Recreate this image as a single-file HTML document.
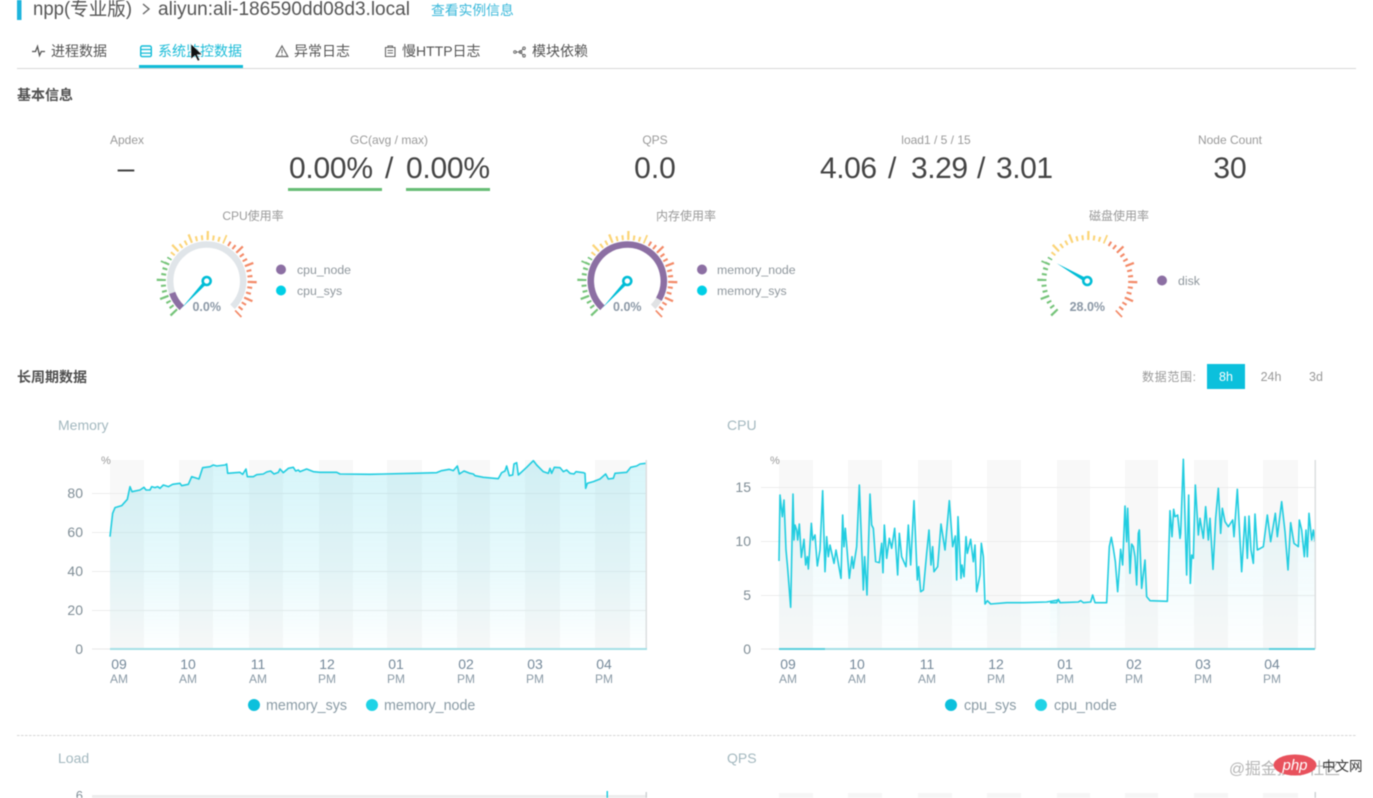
<!DOCTYPE html>
<html lang="zh">
<head>
<meta charset="utf-8">
<title>npp</title>
<style>
html,body{margin:0;padding:0;background:#fff;width:1373px;height:798px;overflow:hidden}
svg{display:block;filter:blur(.6px)}
text{font-family:"Liberation Sans","Noto Sans CJK SC",sans-serif}
.lab{font-size:12px;fill:#9a9a9a}
.val{font-size:30px;fill:#444}
.h{font-size:14px;fill:#505050;font-weight:bold}
.tab{font-size:14px;fill:#555}
.leg{font-size:12.3px;fill:#8f979d}
.pct{font-size:12.5px;fill:#8b98a6;font-weight:bold}
.ct{font-size:14px;fill:#a3b8bf}
.y{font-size:14px;fill:#7f8d96;text-anchor:end}
.xl{font-size:14px;fill:#75899a;text-anchor:middle}
.xs{font-size:12px;fill:#8a9aa6;text-anchor:middle}
.l2{font-size:14.3px;fill:#8a9ba5}
.band{fill:#f8f8f8}
.grid{stroke:#ececec;stroke-width:1}
.line{fill:none;stroke:#22cde0;stroke-width:4.8;stroke-linejoin:round}
</style>
</head>
<body>
<svg width="1373" height="798" viewBox="0 0 1373 798" xmlns="http://www.w3.org/2000/svg">
<defs>
<linearGradient id="gm" gradientUnits="userSpaceOnUse" x1="0" y1="60" x2="0" y2="628">
<stop offset="0" stop-color="#12c4de" stop-opacity=".17"/><stop offset=".55" stop-color="#12c8e2" stop-opacity=".1"/><stop offset="1" stop-color="#12c8e2" stop-opacity=".005"/>
</linearGradient>
<linearGradient id="gc" gradientUnits="userSpaceOnUse" x1="0" y1="30" x2="0" y2="597">
<stop offset="0" stop-color="#12c4de" stop-opacity=".11"/><stop offset="1" stop-color="#12c4de" stop-opacity=".005"/>
</linearGradient>
<g id="ticks" fill="none">
<path d="M-30.76 30.76A43.5 43.5 0 0 1 -36.89 -23.05" pathLength="77" stroke="#76c47a" stroke-width="5" stroke-dasharray="2.7 4.8"/>
<path d="M-34.51 -26.48A43.5 43.5 0 0 1 18.04 -39.58" pathLength="77" stroke="#fbd477" stroke-width="5" stroke-dasharray="2.7 4.8"/>
<path d="M21.75 -37.67A43.5 43.5 0 0 1 29.67 31.81" pathLength="107" stroke="#f38a68" stroke-width="5" stroke-dasharray="2.7 4.8"/>
<path d="M-32.17 32.17A45.5 45.5 0 0 1 -41.4 -18.87" pathLength="69.5" stroke="#76c47a" stroke-width="9" stroke-dasharray="2.7 19.8"/>
<path d="M-32.17 -32.17A45.5 45.5 0 0 1 18.87 -41.4" pathLength="69.5" stroke="#fbd477" stroke-width="9" stroke-dasharray="2.7 19.8"/>
<path d="M32.17 -32.17A45.5 45.5 0 0 1 31.03 33.28" pathLength="92" stroke="#f38a68" stroke-width="9" stroke-dasharray="2.7 19.8"/>
</g>
</defs>

<!-- header -->
<rect x="17" y="0" width="4.5" height="20" fill="#1eb4dc"/>
<text x="33" y="15" font-size="19" fill="#555" textLength="99" lengthAdjust="spacingAndGlyphs">npp(专业版)</text>
<path d="M143 4l6 5-6 5" fill="none" stroke="#666" stroke-width="1.4"/>
<text x="158" y="15" font-size="19" fill="#555" textLength="252" lengthAdjust="spacingAndGlyphs">aliyun:ali-186590dd08d3.local</text>
<text x="431" y="15" font-size="13.8" fill="#3ab8da">查看实例信息</text>

<!-- tabs -->
<path d="M32 51.500h3.500l2-5 2 9 1.800-4H45" fill="none" stroke="#555" stroke-width="1.3"/>
<text class="tab" x="51" y="56">进程数据</text>
<rect x="140.700" y="46" width="10.600" height="10.600" rx="1.500" fill="none" stroke="#12bcd8" stroke-width="1.400"/>
<path d="M141 49.500h10M141 53.100h10" stroke="#12bcd8" stroke-width="1.200"/>
<text class="tab" x="158" y="56" style="fill:#1cbcd8">系统监控数据</text>
<rect x="139" y="65" width="104" height="3" fill="#12bcd8"/>
<path d="M282 46l5.800 10.500h-11.600z" fill="none" stroke="#666" stroke-width="1.200"/>
<path d="M282 49.500v4M282 54.500v1" stroke="#666" stroke-width="1"/>
<text class="tab" x="294" y="56">异常日志</text>
<path d="M385.500 47.500h9.500v9H385.500zM388 46h4.500v1.500H388zM387.500 50.500h5.500M387.500 53h5.500" fill="none" stroke="#666" stroke-width="1.100"/>
<text class="tab" x="402" y="56">慢HTTP日志</text>
<path d="M515.500 52h4M520 52l3.500-3.500M520 52l3.500 3.500" stroke="#777" stroke-width=".9" fill="none"/>
<circle cx="515" cy="52" r="1.300" fill="none" stroke="#666"/><circle cx="524" cy="48.300" r="1.300" fill="none" stroke="#666"/><circle cx="524" cy="55.700" r="1.300" fill="none" stroke="#666"/><circle cx="520.500" cy="52" r="1.400" fill="none" stroke="#666"/>
<text class="tab" x="532" y="56">模块依赖</text>
<rect x="17" y="68" width="1339" height="1" fill="#d8d8d8"/>
<path d="M191 44v15l4-3.600 2.800 5.600 2-1-2.800-5.400 5 0z" fill="#111" stroke="#fff" stroke-width=".5"/>

<text class="h" x="17" y="100">基本信息</text>

<!-- metrics -->
<g text-anchor="middle">
<text class="lab" x="127" y="144">Apdex</text>
<text class="lab" x="389" y="144">GC(avg / max)</text>
<text class="lab" x="655" y="144">QPS</text>
<text class="lab" x="936" y="144">load1 / 5 / 15</text>
<text class="lab" x="1230" y="144">Node Count</text>
<text class="val" x="126" y="178">–</text>
<text class="val" x="655" y="178">0.0</text>
<text class="val" x="1230" y="178">30</text>
</g>
<text class="val" x="289" y="178" textLength="84">0.00%</text>
<text class="val" x="385" y="178">/</text>
<text class="val" x="406" y="178" textLength="84">0.00%</text>
<text class="val" x="820" y="178" textLength="57">4.06</text>
<text class="val" x="888" y="178">/</text>
<text class="val" x="911" y="178" textLength="57">3.29</text>
<text class="val" x="977" y="178">/</text>
<text class="val" x="996" y="178" textLength="57">3.01</text>
<rect x="288" y="188" width="94" height="3" fill="#67bd75"/>
<rect x="406" y="188" width="84" height="3" fill="#67bd75"/>

<!-- gauges -->
<g text-anchor="middle">
<text class="lab" x="253" y="220">CPU使用率</text>
<text class="lab" x="686" y="220">内存使用率</text>
<text class="lab" x="1119" y="220">磁盘使用率</text>
</g>

<g transform="translate(206.7 281)">
<use href="#ticks"/>
<path d="M-24.9 26.7A36.5 36.5 0 1 1 25.8 25.8" fill="none" stroke="#e0e5e9" stroke-width="6.5"/>
<path d="M-24.9 26.7A36.5 36.5 0 0 1 -34.5 11.9" fill="none" stroke="#8c6fa3" stroke-width="6.5"/>
<polygon points="-25,27 1.5,1.4 -1.5,-1.4" fill="#00bdd6"/>
<circle r="4" fill="#fff" stroke="#00bdd6" stroke-width="2.6"/>
<text class="pct" x="0" y="30" text-anchor="middle">0.0%</text>
</g>
<g transform="translate(627.3 281)">
<use href="#ticks"/>
<path d="M-24.9 26.7A36.5 36.5 0 1 1 25.8 25.8" fill="none" stroke="#e0e2e4" stroke-width="6.5"/>
<path d="M-24.9 26.7A36.5 36.5 0 1 1 31.6 18.25" fill="none" stroke="#8c6fa3" stroke-width="6.5"/>
<polygon points="-25,27 1.5,1.4 -1.5,-1.4" fill="#00bdd6"/>
<circle r="4" fill="#fff" stroke="#00bdd6" stroke-width="2.6"/>
<text class="pct" x="0" y="30" text-anchor="middle">0.0%</text>
</g>
<g transform="translate(1087.3 281)">
<use href="#ticks"/>
<polygon points="-30.7,-17.7 1,-1.9 -1,1.9" fill="#00bdd6"/>
<circle r="4" fill="#fff" stroke="#00bdd6" stroke-width="2.6"/>
<text class="pct" x="0" y="30" text-anchor="middle">28.0%</text>
</g>

<circle cx="281" cy="269.500" r="5" fill="#8c6fa3"/><text class="leg" x="297" y="274">cpu_node</text>
<circle cx="281" cy="290.500" r="5" fill="#00cfe6"/><text class="leg" x="297" y="295">cpu_sys</text>
<circle cx="702" cy="269.500" r="5" fill="#8c6fa3"/><text class="leg" x="717" y="274">memory_node</text>
<circle cx="702" cy="290.500" r="5" fill="#00cfe6"/><text class="leg" x="717" y="295">memory_sys</text>
<circle cx="1162" cy="280.500" r="5" fill="#8c6fa3"/><text class="leg" x="1178" y="285">disk</text>

<!-- long period -->
<text class="h" x="17" y="382">长周期数据</text>
<text class="lab" x="1142" y="381" textLength="54">数据范围:</text>
<rect x="1207" y="364" width="38" height="25" fill="#0cc0dc"/>
<text x="1226" y="381" font-size="12.500" fill="#fff" text-anchor="middle">8h</text>
<text x="1271" y="381" font-size="12.500" fill="#999" text-anchor="middle">24h</text>
<text x="1316" y="381" font-size="12.500" fill="#999" text-anchor="middle">3d</text>

<!-- Memory chart -->
<text class="ct" x="58" y="430">Memory</text>
<g class="band">
<rect x="110" y="460" width="34" height="189"/><rect x="179" y="460" width="34" height="189"/><rect x="249" y="460" width="34" height="189"/><rect x="319" y="460" width="34" height="189"/><rect x="387" y="460" width="35" height="189"/><rect x="457" y="460" width="33" height="189"/><rect x="525" y="460" width="35" height="189"/><rect x="595" y="460" width="35" height="189"/>
</g>
<path class="grid" d="M92 493.500H646M92 532.500H646M92 571.500H646M92 610.500H646"/>
<g transform="translate(50 440) scale(.33333)">
<path fill="url(#gm)" d="M180 290L188 220 195 203 215 197 232 178 240 140 246 155 270 150 282 142 288 150 300 150 305 140 315 143 323 140 330 145 340 135 355 140 368 133 390 130 395 137 415 133 425 110 447 117 458 83 480 80 490 75 500 78 525 75 530 72 533 100 570 97 578 103 588 87 592 110 610 110 620 104 640 102 650 96 662 93 672 102 685 97 690 87 700 98 715 85 730 82 737 93 745 90 750 95 770 87 790 95 810 97 860 97 870 102 960 103 1090 100 1160 98 1175 92 1198 88 1210 92 1222 78 1228 102 1242 93 1260 100 1270 102 1275 107 1300 112 1345 116 1355 98 1365 93 1370 78 1378 107 1388 105 1392 72 1400 68 1405 105 1430 82 1450 62 1460 75 1480 95 1495 100 1500 85 1505 100 1513 82 1530 83 1540 95 1550 90 1560 100 1572 102 1578 95 1600 98 1605 100 1607 145 1612 130 1630 125 1650 117 1667 102 1675 117 1690 115 1695 100 1730 97 1742 82 1760 78 1770 72 1788 70V628H180Z"/>
<path class="line" d="M180 290L188 220 195 203 215 197 232 178 240 140 246 155 270 150 282 142 288 150 300 150 305 140 315 143 323 140 330 145 340 135 355 140 368 133 390 130 395 137 415 133 425 110 447 117 458 83 480 80 490 75 500 78 525 75 530 72 533 100 570 97 578 103 588 87 592 110 610 110 620 104 640 102 650 96 662 93 672 102 685 97 690 87 700 98 715 85 730 82 737 93 745 90 750 95 770 87 790 95 810 97 860 97 870 102 960 103 1090 100 1160 98 1175 92 1198 88 1210 92 1222 78 1228 102 1242 93 1260 100 1270 102 1275 107 1300 112 1345 116 1355 98 1365 93 1370 78 1378 107 1388 105 1392 72 1400 68 1405 105 1430 82 1450 62 1460 75 1480 95 1495 100 1500 85 1505 100 1513 82 1530 83 1540 95 1550 90 1560 100 1572 102 1578 95 1600 98 1605 100 1607 145 1612 130 1630 125 1650 117 1667 102 1675 117 1690 115 1695 100 1730 97 1742 82 1760 78 1770 72 1788 70"/>
</g>
<rect x="645.500" y="460" width="1.500" height="189" fill="#dcdfe0"/>
<rect x="92" y="648.500" width="18" height="1" fill="#e6e6e6"/>
<rect x="110" y="648" width="537" height="2" fill="#a6e0e6"/>
<text x="101" y="464" font-size="11" fill="#999">%</text>
<text class="y" x="83" y="498">80</text><text class="y" x="83" y="537">60</text><text class="y" x="83" y="576">40</text><text class="y" x="83" y="615">20</text><text class="y" x="83" y="654">0</text>
<text class="xl" x="119" y="669">09</text><text class="xs" x="119" y="683">AM</text>
<text class="xl" x="188" y="669">10</text><text class="xs" x="188" y="683">AM</text>
<text class="xl" x="258" y="669">11</text><text class="xs" x="258" y="683">AM</text>
<text class="xl" x="327" y="669">12</text><text class="xs" x="327" y="683">PM</text>
<text class="xl" x="396" y="669">01</text><text class="xs" x="396" y="683">PM</text>
<text class="xl" x="466" y="669">02</text><text class="xs" x="466" y="683">PM</text>
<text class="xl" x="535" y="669">03</text><text class="xs" x="535" y="683">PM</text>
<text class="xl" x="604" y="669">04</text><text class="xs" x="604" y="683">PM</text>
<circle cx="254" cy="705" r="6" fill="#0cc0dc"/><text class="l2" x="266" y="710">memory_sys</text>
<circle cx="372" cy="705" r="6" fill="#1fd3e6"/><text class="l2" x="384" y="710">memory_node</text>

<!-- CPU chart -->
<text class="ct" x="727" y="430">CPU</text>
<g class="band">
<rect x="779" y="460" width="34" height="189"/><rect x="848" y="460" width="34" height="189"/><rect x="918" y="460" width="34" height="189"/><rect x="987" y="460" width="34" height="189"/><rect x="1057" y="460" width="33" height="189"/><rect x="1125" y="460" width="33" height="189"/><rect x="1194" y="460" width="34" height="189"/><rect x="1263" y="460" width="35" height="189"/>
</g>
<path class="grid" d="M761 487.500H1315M761 541.500H1315M761 595.500H1315"/>
<g transform="translate(760 450) scale(.33333)">
<path fill="url(#gc)" d="M57 333L60 135 67 200 72 150 78 300 83 355 92 472 99 132 102 270 105 225 110 240 113 270 118 222 124 322 132 268 137 345 142 320 145 357 149 300 154 220 158 270 165 255 172 348 180 300 188 122 195 365 200 260 205 320 210 285 222 340 228 300 243 385 248 195 252 290 256 235 268 385 276 320 280 355 290 290 298 105 310 420 314 320 321 435 330 132 335 225 340 235 347 335 358 338 365 280 369 368 373 225 380 325 388 265 395 295 404 235 413 375 418 250 425 320 438 350 445 225 452 345 462 152 472 390 476 350 482 425 490 420 500 310 507 240 513 345 518 290 522 365 533 350 543 222 555 300 568 152 578 290 586 258 590 390 594 200 603 385 606 345 612 380 618 260 622 310 632 268 640 335 645 285 650 425 660 375 664 280 670 320 675 462 682 452 692 462 740 458 790 458 860 456 895 450 900 456V597H57Z"/>
<path class="line" d="M57 333L60 135 67 200 72 150 78 300 83 355 92 472 99 132 102 270 105 225 110 240 113 270 118 222 124 322 132 268 137 345 142 320 145 357 149 300 154 220 158 270 165 255 172 348 180 300 188 122 195 365 200 260 205 320 210 285 222 340 228 300 243 385 248 195 252 290 256 235 268 385 276 320 280 355 290 290 298 105 310 420 314 320 321 435 330 132 335 225 340 235 347 335 358 338 365 280 369 368 373 225 380 325 388 265 395 295 404 235 413 375 418 250 425 320 438 350 445 225 452 345 462 152 472 390 476 350 482 425 490 420 500 310 507 240 513 345 518 290 522 365 533 350 543 222 555 300 568 152 578 290 586 258 590 390 594 200 603 385 606 345 612 380 618 260 622 310 632 268 640 335 645 285 650 425 660 375 664 280 670 320 675 462 682 452 692 462 740 458 790 458 860 456 895 450 900 456"/>
</g>
<g transform="translate(1050 450) scale(.33333)">
<path fill="url(#gc)" d="M0 458L20 458 25 448 30 458 85 456 92 452 100 458 122 456 128 435 135 458 170 458 178 290 184 262 190 295 196 335 203 425 212 298 218 345 225 168 230 275 233 175 240 370 245 282 250 290 255 320 260 405 265 250 268 240 275 415 285 330 290 440 300 452 352 454 360 182 366 260 371 178 375 200 383 195 390 265 392 250 400 28 410 375 416 135 421 400 425 315 430 325 436 105 445 255 450 205 460 265 467 170 475 270 480 205 489 358 497 205 505 115 512 250 517 175 525 215 535 230 548 210 552 260 562 118 575 365 585 200 592 325 597 198 603 300 610 340 615 192 622 300 640 290 652 195 662 275 676 190 682 260 695 155 705 245 714 360 722 218 732 280 745 290 748 210 755 240 763 320 768 240 772 320 777 190 785 270 790 240 795 275V597H0Z"/>
<path class="line" d="M0 458L20 458 25 448 30 458 85 456 92 452 100 458 122 456 128 435 135 458 170 458 178 290 184 262 190 295 196 335 203 425 212 298 218 345 225 168 230 275 233 175 240 370 245 282 250 290 255 320 260 405 265 250 268 240 275 415 285 330 290 440 300 452 352 454 360 182 366 260 371 178 375 200 383 195 390 265 392 250 400 28 410 375 416 135 421 400 425 315 430 325 436 105 445 255 450 205 460 265 467 170 475 270 480 205 489 358 497 205 505 115 512 250 517 175 525 215 535 230 548 210 552 260 562 118 575 365 585 200 592 325 597 198 603 300 610 340 615 192 622 300 640 290 652 195 662 275 676 190 682 260 695 155 705 245 714 360 722 218 732 280 745 290 748 210 755 240 763 320 768 240 772 320 777 190 785 270 790 240 795 275"/>
</g>
<rect x="1314.500" y="460" width="1.500" height="189" fill="#dcdfe0"/>
<rect x="761" y="648.500" width="18" height="1" fill="#e6e6e6"/>
<rect x="779" y="648" width="536" height="2" fill="#a6e0e6"/>
<rect x="779" y="648" width="46" height="2" fill="#5ccfdc"/>
<rect x="1269" y="648" width="46" height="2" fill="#5ccfdc"/>
<text x="770" y="464" font-size="11" fill="#999">%</text>
<text class="y" x="751" y="492">15</text><text class="y" x="751" y="546">10</text><text class="y" x="751" y="600">5</text><text class="y" x="751" y="654">0</text>
<text class="xl" x="788" y="669">09</text><text class="xs" x="788" y="683">AM</text>
<text class="xl" x="857" y="669">10</text><text class="xs" x="857" y="683">AM</text>
<text class="xl" x="927" y="669">11</text><text class="xs" x="927" y="683">AM</text>
<text class="xl" x="996" y="669">12</text><text class="xs" x="996" y="683">PM</text>
<text class="xl" x="1065" y="669">01</text><text class="xs" x="1065" y="683">PM</text>
<text class="xl" x="1134" y="669">02</text><text class="xs" x="1134" y="683">PM</text>
<text class="xl" x="1203" y="669">03</text><text class="xs" x="1203" y="683">PM</text>
<text class="xl" x="1272" y="669">04</text><text class="xs" x="1272" y="683">PM</text>
<circle cx="951" cy="705" r="6" fill="#0cc0dc"/><text class="l2" x="964" y="710">cpu_sys</text>
<circle cx="1041" cy="705" r="6" fill="#1fd3e6"/><text class="l2" x="1054" y="710">cpu_node</text>

<!-- dashed divider and next row -->
<path d="M17 735.500H1356" stroke="#d5d5d5" stroke-width="1" stroke-dasharray="2.500 1.500"/>
<text class="ct" x="58" y="763">Load</text>
<text class="ct" x="727" y="763">QPS</text>
<text class="y" x="83" y="800" style="font-size:13px">6</text>
<rect x="92" y="795" width="554" height="3" fill="#ededed"/>
<g fill="#f6f6f6">
<rect x="779" y="793" width="34" height="5"/><rect x="848" y="793" width="34" height="5"/><rect x="918" y="793" width="34" height="5"/><rect x="987" y="793" width="34" height="5"/><rect x="1057" y="793" width="33" height="5"/><rect x="1125" y="793" width="33" height="5"/><rect x="1194" y="793" width="34" height="5"/><rect x="1263" y="793" width="35" height="5"/>
</g>
<rect x="606.500" y="791" width="1.500" height="7" fill="#22cde0"/>
<rect x="645.500" y="792" width="1.500" height="6" fill="#cfd3d5"/>
<rect x="1314.500" y="792" width="1.500" height="6" fill="#cfd3d5"/>

<!-- watermark -->
<text x="1229" y="774" font-size="16" fill="#b5b5b5" textLength="111" lengthAdjust="spacingAndGlyphs">@掘金技术社区</text>
<ellipse cx="1295" cy="765" rx="21.500" ry="10.500" fill="#e8515c"/>
<text x="1295" y="770" font-size="15" fill="#fff" font-style="italic" text-anchor="middle">php</text>
<text x="1322" y="771" font-size="13.500" fill="#333">中文网</text>
</svg>
</body>
</html>
